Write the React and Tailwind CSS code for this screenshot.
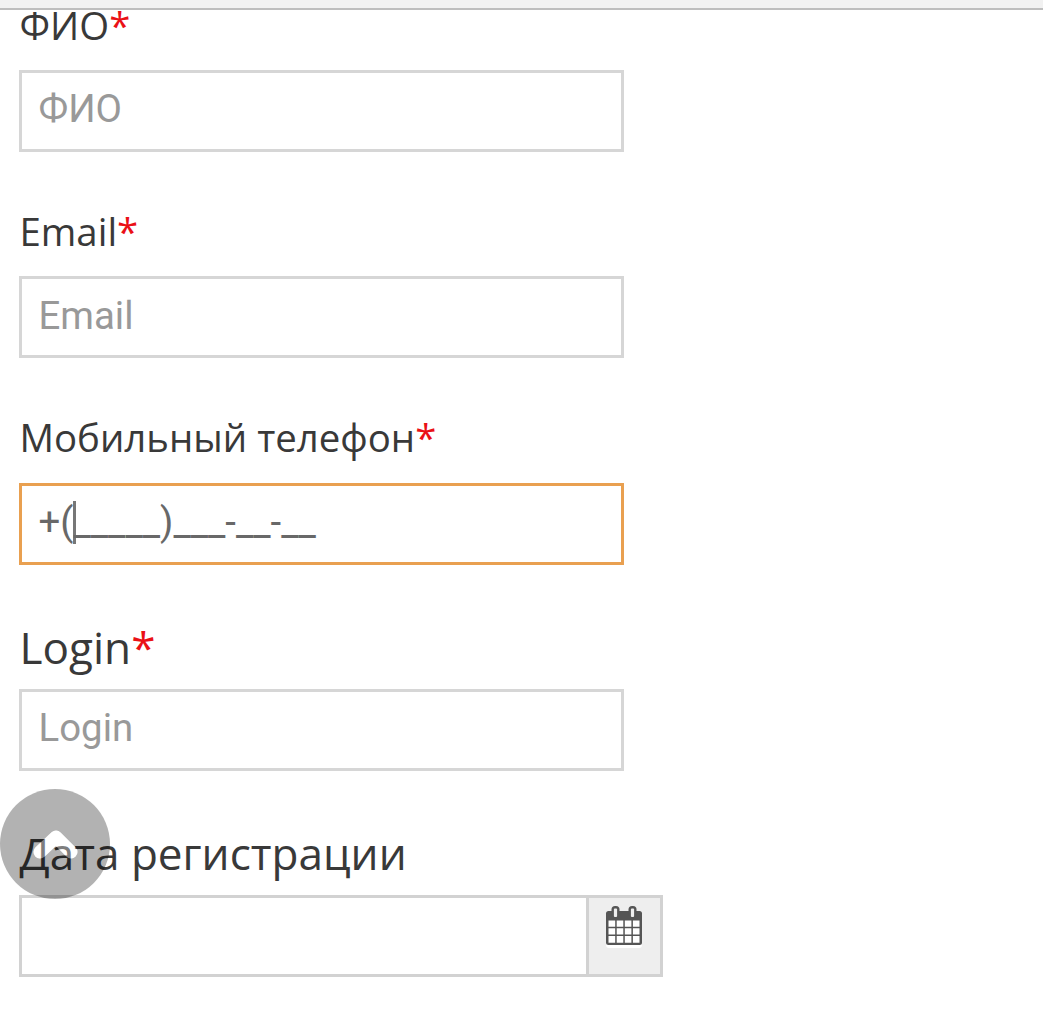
function Star() {
  return <span className="text-[#ea1016]">*</span>;
}

function Label({ children, large, className }) {
  const size = large ? 'text-[44.1px]' : 'text-[38.4px]';
  return (
    <div className={`flex items-center pl-[19.5px] whitespace-nowrap leading-none text-[#393939] font-['Open_Sans',sans-serif] ${size} ${className}`}>
      <span>{children}</span>
    </div>
  );
}

function Box({ children, active, className = 'pb-[4px]' }) {
  const tone = active ? 'border-[#e9a050] text-[#686868]' : 'border-[#d6d6d6] text-[#999999]';
  return (
    <div className={`ml-[19px] flex h-[82px] w-[605px] items-center whitespace-nowrap border-3 bg-white pl-[16.5px] font-[Roboto,sans-serif] text-[38.4px] leading-none ${tone} ${className}`}>
      {children}
    </div>
  );
}

function CalendarIcon() {
  return (
    <svg width="38" height="42" viewBox="0 0 38 42" className="block">
      <rect x="1" y="7" width="36" height="35" rx="3" fill="#fff" />
      <rect x="1" y="5" width="36" height="34" rx="2.5" fill="#555" />
      <path d="M3.5 14.5h6.7v6.3H3.5zM11.7 14.5h6.6v6.3h-6.6zM19.8 14.5h6.6v6.3h-6.6zM27.9 14.5h6.6v6.3h-6.6zM3.5 22.3h6.7v6.3H3.5zM11.7 22.3h6.6v6.3h-6.6zM19.8 22.3h6.6v6.3h-6.6zM27.9 22.3h6.6v6.3h-6.6zM3.5 30.1h6.7v6.6H3.5zM11.7 30.1h6.6v6.6h-6.6zM19.8 30.1h6.6v6.6h-6.6zM27.9 30.1h6.6v6.6h-6.6z" fill="#fff" />
      <rect x="6.5" y="0" width="8" height="12.5" rx="3.5" fill="#555" />
      <rect x="23.5" y="0" width="8" height="12.5" rx="3.5" fill="#555" />
      <rect x="8.9" y="2.5" width="3.2" height="8.5" rx="1" fill="#eee" />
      <rect x="25.9" y="2.5" width="3.2" height="8.5" rx="1" fill="#eee" />
    </svg>
  );
}

export default function App() {
  return (
    <main className="relative h-[1028px] w-[1043px] overflow-hidden bg-white">
      <div className="h-[10px] border-b-2 border-[#bdbdbd] bg-[#f1f1f1]" />

      <Label className="h-[60px] pb-[30px]">ФИО<Star /></Label>
      <Box>ФИО</Box>

      <Label className="mt-[52px] h-[72px] pb-[18px]">Email<Star /></Label>
      <Box className="pb-[2px]">Email</Box>

      <Label className="mt-[52px] h-[73px] pb-[18px]">Мобильный телефон<Star /></Label>
      <Box active>
        <span>+(</span>
        <span className="-mr-[3px] h-[43px] w-[3px] bg-[#777]" />
        <span>_____)___-__-__</span>
      </Box>

      <Label large className="mt-[52px] h-[72px] pb-[12px]">Login<Star /></Label>
      <Box>Login</Box>

      <Label large className="mt-[52px] h-[72px] pb-[12px]">Дата регистрации</Label>
      <div className="ml-[19px] flex h-[82px] w-[644px] border-3 border-[#d2d2d2]">
        <div className="flex-1 bg-white" />
        <div className="flex w-[74px] justify-center border-l-3 border-[#d2d2d2] bg-[#eeeeee] pt-[8px] pr-[2px]">
          <CalendarIcon />
        </div>
      </div>

      <button aria-label="Наверх" className="absolute top-[789px] left-0 size-[110px]">
        <svg width="110" height="110" viewBox="0 0 110 110">
          <mask id="chevron-hole">
            <rect width="110" height="110" fill="#fff" />
            <path d="M40 63L56 48L71 63" fill="none" stroke="#000" strokeWidth="13" strokeLinejoin="round" strokeLinecap="round" />
          </mask>
          <circle cx="55" cy="55" r="55" fill="#000" fillOpacity=".3" mask="url(#chevron-hole)" />
          <path d="M40 63L56 48L71 63" fill="none" stroke="#fff" strokeOpacity=".35" strokeWidth="13" strokeLinejoin="round" strokeLinecap="round" />
        </svg>
      </button>
    </main>
  );
}
